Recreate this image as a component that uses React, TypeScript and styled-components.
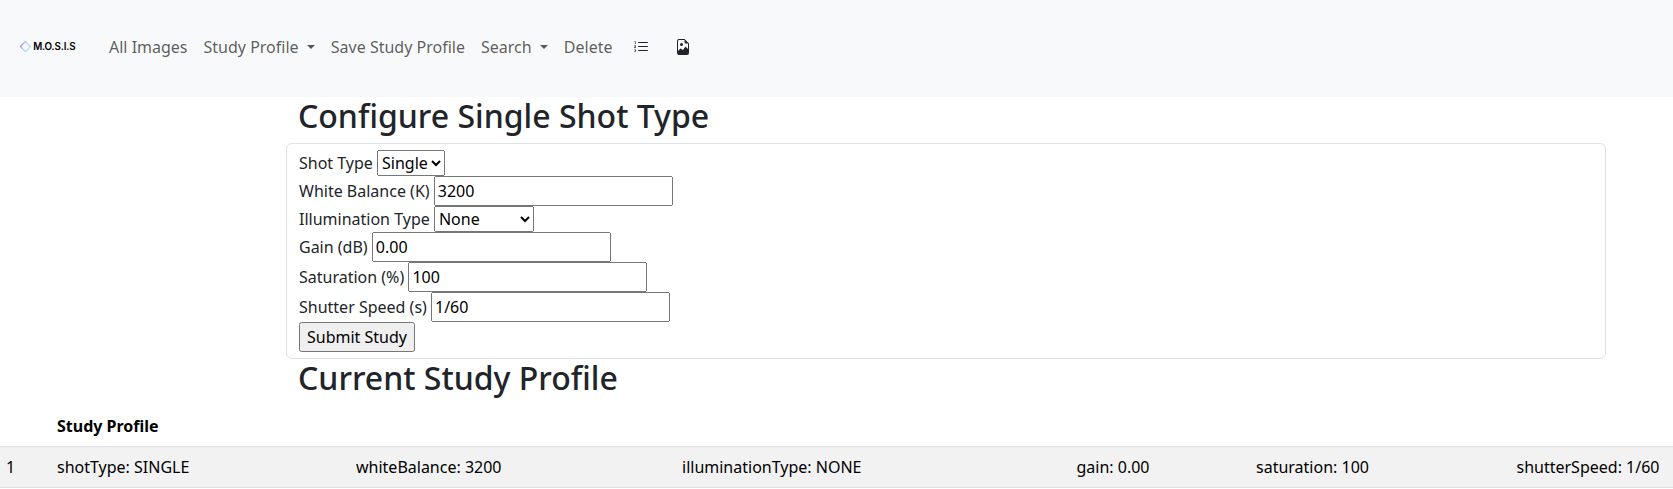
import React from "react";
import styled, { createGlobalStyle } from "styled-components";
import { BsListOl, BsFileEarmarkImage } from "react-icons/bs";

const GlobalStyle = createGlobalStyle`
  *, *::before, *::after { box-sizing: border-box; }
  html, body { overflow: hidden; }
  body {
    margin: 0;
    font-family: "Noto Sans", sans-serif;
    font-size: 16px;
    line-height: 1.5;
    color: #212529;
    background: #fff;
  }
`;

const Navbar = styled.nav`
  display: flex;
  align-items: center;
  height: 97px;
  padding: 0 12px 3px;
  background: #f8f9fa;
`;

const Brand = styled.a`
  display: flex;
  width: 73px;
  margin-right: 16px;
`;

const NavLink = styled.a`
  padding: 8px;
  color: rgba(0, 0, 0, 0.65);
  text-decoration: none;
  white-space: nowrap;
`;

const Toggle = styled(NavLink)`
  &::after {
    content: "";
    display: inline-block;
    margin-left: 8.25px;
    vertical-align: 4px;
    border-top: 4.8px solid;
    border-right: 4.8px solid transparent;
    border-left: 4.8px solid transparent;
  }
`;

const IconLink = styled.a`
  display: flex;
  padding: 0 13.5px 0 12.5px;
  color: #212529;
`;

const Content = styled.main`
  margin: 0 67px 0 286px;
`;

const Heading = styled.h2`
  margin: 0 0 8px;
  padding-left: 12px;
  font-size: 32px;
  font-weight: 500;
  line-height: 1.2;
`;

const Card = styled.form`
  padding: 6px 12px;
  border: 1px solid #dee2e6;
  border-radius: 6px;
`;

const Control = styled.input`
  width: 239px;
  margin: 0;
  font: inherit;
`;

const Select = styled.select<{ $width?: number }>`
  width: ${(p) => (p.$width ? `${p.$width}px` : "auto")};
  margin: 0;
  font: inherit;
`;

const Submit = styled.button`
  display: block;
  margin: 0;
  font: inherit;
`;

const Table = styled.table`
  width: 100%;
  border-collapse: collapse;
  color: #000;
  table-layout: fixed;
`;

const Cell = styled.td`
  padding: 8px 0 8px 6px;
  text-align: left;
  border-bottom: 1px solid #dee2e6;
  white-space: nowrap;
`;

const HeadCell = styled(Cell).attrs({ as: "th" })`
  font-weight: 700;
`;

const StripedRow = styled.tr`
  background: #f2f2f2;
`;

const Column = styled.col<{ $width?: number }>`
  width: ${(p) => (p.$width ? `${p.$width}px` : "auto")};
`;

const Logo = () => (
  <svg width="73" height="20" viewBox="0 0 73 20" aria-label="M.O.S.I.S">
    <defs>
      <linearGradient id="diamond" x1="0" y1="0" x2="1" y2="0.4">
        <stop offset="0" stopColor="#8f72ff" />
        <stop offset="0.55" stopColor="#b4c9ff" />
        <stop offset="1" stopColor="#a8e4ff" />
      </linearGradient>
    </defs>
    <path d="M13.4 4.6 18.4 9.6 13.4 14.6 8.4 9.6Z" fill="none" stroke="url(#diamond)" strokeWidth="1.2" />
    <text x="21.2" y="13" fontFamily="Inter, sans-serif" fontSize="9.8" fontWeight="600" fill="#000" textLength="42.3" lengthAdjust="spacing">M.O.S.I.S</text>
  </svg>
);

interface Field {
  label: string;
  value: string;
  options?: string[];
  width?: number;
}

const fields: Field[] = [
  { label: "Shot Type", value: "Single", options: ["Single"] },
  { label: "White Balance (K)", value: "3200" },
  { label: "Illumination Type", value: "None", options: ["None"], width: 100 },
  { label: "Gain (dB)", value: "0.00" },
  { label: "Saturation (%)", value: "100" },
  { label: "Shutter Speed (s)", value: "1/60" },
];

const columns = [51, 299, 326, 394.5, 179.5, 260.5, undefined];
const profile = [
  "shotType: SINGLE",
  "whiteBalance: 3200",
  "illuminationType: NONE",
  "gain: 0.00",
  "saturation: 100",
  "shutterSpeed: 1/60",
];

export default function App() {
  return (
    <>
      <GlobalStyle />
      <Navbar>
        <Brand><Logo /></Brand>
        <NavLink>All Images</NavLink>
        <Toggle>Study Profile</Toggle>
        <NavLink>Save Study Profile</NavLink>
        <Toggle>Search</Toggle>
        <NavLink>Delete</NavLink>
        <IconLink><BsListOl /></IconLink>
        <IconLink><BsFileEarmarkImage /></IconLink>
      </Navbar>
      <Content>
        <Heading>Configure Single Shot Type</Heading>
        <Card>
          {fields.map((f) => (
            <div key={f.label}>
              <label>{f.label} </label>
              {f.options ? (
                <Select defaultValue={f.value} $width={f.width}>
                  {f.options.map((o) => <option key={o}>{o}</option>)}
                </Select>
              ) : (
                <Control type="text" defaultValue={f.value} />
              )}
            </div>
          ))}
          <Submit type="button">Submit Study</Submit>
        </Card>
        <Heading>Current Study Profile</Heading>
      </Content>
      <Table>
        <colgroup>
          {columns.map((w, i) => <Column key={i} $width={w} />)}
        </colgroup>
        <thead>
          <tr>
            <HeadCell />
            <HeadCell colSpan={6}>Study Profile</HeadCell>
          </tr>
        </thead>
        <tbody>
          <StripedRow>
            <Cell>1</Cell>
            {profile.map((p) => <Cell key={p}>{p}</Cell>)}
          </StripedRow>
        </tbody>
      </Table>
    </>
  );
}
